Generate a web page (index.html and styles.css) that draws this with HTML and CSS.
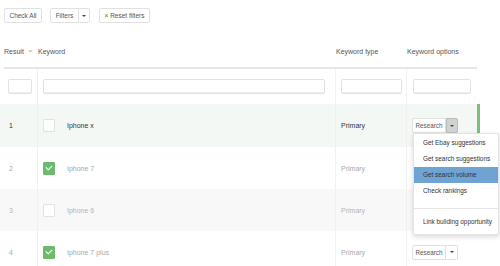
FILE: index.html
```html
<!DOCTYPE html>
<html lang="en">
<head>
  <meta charset="UTF-8" />
  <title>Keywords</title>
  <link rel="stylesheet" href="styles.css">
</head>
<body>
  <div class="toolbar">
    <button class="btn">Check All</button>
    <div class="btn-group">
      <button class="btn">Filters</button>
      <button class="btn btn-caret"><span class="caret"></span></button>
    </div>
    <button class="btn">&#215; Reset filters</button>
  </div>

  <div class="grid">
    <div class="row head">
      <div class="cell">Result <span class="chev">&#8964;</span></div>
      <div class="cell">Keyword</div>
      <div class="cell">Keyword type</div>
      <div class="cell">Keyword options</div>
    </div>

    <div class="row filters">
      <div class="cell"><input class="f f-num" /></div>
      <div class="cell"><input class="f f-kw" /></div>
      <div class="cell"><input class="f f-type" /></div>
      <div class="cell"><input class="f f-opt" /></div>
    </div>

    <div class="row active">
      <div class="cell">1</div>
      <div class="cell"><span class="check"></span><span class="kw">Iphone x</span></div>
      <div class="cell">Primary</div>
      <div class="cell opts">
        <div class="btn-group">
          <button class="btn">Research</button>
          <button class="btn btn-caret pressed"><span class="caret"></span></button>
        </div>
        <ul class="menu">
          <li>Get Ebay suggestions</li>
          <li>Get search suggestions</li>
          <li class="hl">Get search volume</li>
          <li>Check rankings</li>
          <li class="divider"></li>
          <li>Link building opportunity</li>
        </ul>
      </div>
    </div>

    <div class="row muted">
      <div class="cell">2</div>
      <div class="cell"><span class="check on"></span><span class="kw">Iphone 7</span></div>
      <div class="cell">Primary</div>
      <div class="cell"></div>
    </div>

    <div class="row muted striped">
      <div class="cell">3</div>
      <div class="cell"><span class="check"></span><span class="kw">Iphone 6</span></div>
      <div class="cell">Primary</div>
      <div class="cell"></div>
    </div>

    <div class="row muted">
      <div class="cell">4</div>
      <div class="cell"><span class="check on"></span><span class="kw">Iphone 7 plus</span></div>
      <div class="cell">Primary</div>
      <div class="cell opts">
        <div class="btn-group">
          <button class="btn">Research</button>
          <button class="btn btn-caret"><span class="caret"></span></button>
        </div>
      </div>
    </div>
  </div>
</body>
</html>
```

FILE: styles.css
```css
* { box-sizing: border-box; margin: 0; padding: 0; }
body {
  font-family: 'Liberation Sans', Arial, sans-serif;
  font-size: 7px;
  color: #333;
  background: #fff;
  overflow: hidden;
}
.toolbar {
  display: flex;
  gap: 8px;
  padding: 8px 4px 0;
  height: 34px;
}
.btn {
  font-family: inherit;
  font-size: 6.5px;
  color: #555;
  background: #fff;
  border: 1px solid #e0e0e0;
  border-radius: 2px;
  height: 15px;
  padding: 0 6px;
  cursor: pointer;
}
.btn-group { display: flex; }
.btn-group .btn:first-child { border-radius: 2px 0 0 2px; }
.btn-group .btn-caret {
  border-left: none;
  border-radius: 0 2px 2px 0;
  width: 11px;
  padding: 0;
  display: flex;
  align-items: center;
  justify-content: center;
}
.toolbar .btn-group .btn:first-child { width: 29px; padding: 0; }
.toolbar > .btn:first-child { width: 38px; padding: 0; }
.toolbar > .btn:last-child { width: 51px; padding: 0; margin-left: 1px; }
.caret {
  width: 0;
  height: 0;
  border-left: 2px solid transparent;
  border-right: 2px solid transparent;
  border-top: 2px solid #444;
}
.btn-caret.pressed {
  background: #d2d2d2;
  border: 1px solid #bbb;
}

.grid { width: 477px; }
.row {
  display: grid;
  grid-template-columns: 37px 298px 71px 71px;
  align-items: center;
}
.row .cell { padding-left: 5px; height: 100%; display: flex; align-items: center; }
.row .cell:first-child { padding-left: 9px; }
.row .cell + .cell { border-left: 1px solid #f0f0f0; }

.head {
  height: 35px;
  margin-left: 4px;
  width: 473px;
  grid-template-columns: 33px 298px 71px 71px;
  border-bottom: 2px solid #e6e6e6;
  color: #555;
}
.head .cell { padding-left: 1px; padding-top: 1px; }
.head .cell:first-child { padding-left: 0; }
.head .cell + .cell { border-left: none; }
.chev { color: #7fbf7f; font-size: 8px; margin-left: 3px; position: relative; top: -2px; }

.filters { height: 35px; }
.filters .cell:first-child { padding-left: 8px; }
.f {
  height: 15px;
  border: 1px solid #e2e2e2;
  border-radius: 2px;
  background: #fff;
  box-shadow: inset 0 -1px 0 #eee;
}
.f-num { width: 24px; }
.f-kw { width: 282px; }
.f-type { width: 61px; }
.f-opt { width: 58px; margin-left: 1px; }

.active, .muted { height: 42px; }
.active { background: #f3f8f5; height: 43px; position: relative; }
.active::after {
  content: "";
  position: absolute;
  right: -3px;
  top: 0;
  width: 3px;
  height: 43px;
  background: #79c17a;
}
.striped { background: #f8f8f8; }
.muted { color: #a8a8a8; }
.muted.striped { color: #b5b5b5; }

.check {
  width: 12px;
  height: 13px;
  border: 1px solid #e2e2e2;
  background: #fff;
  border-radius: 1px;
  margin-right: 12px;
  display: inline-flex;
  align-items: center;
  justify-content: center;
  flex-shrink: 0;
}
.check.on {
  background: #6cbb6c;
  border-color: #6cbb6c;
}
.check.on::after {
  content: "";
  width: 5px;
  height: 3px;
  border-left: 1.5px solid #fff;
  border-bottom: 1.5px solid #fff;
  transform: rotate(-45deg);
  margin-top: -2px;
}

.opts { position: relative; padding-left: 6px; }
.opts .btn { height: 15px; color: #555; font-size: 6.3px; }
.opts .btn:first-child { width: 34px; padding: 0; }
.opts .btn-caret { width: 12px; }

.menu {
  position: absolute;
  left: 6px;
  top: 29px;
  width: 86px;
  list-style: none;
  background: #fff;
  border: 1px solid #e4e4e4;
  box-shadow: 0 2px 5px rgba(0,0,0,0.15);
  padding: 1px 0 4px;
  z-index: 2;
  color: #333;
  font-size: 6.4px;
}
.menu li {
  height: 16px;
  line-height: 16px;
  padding-left: 9px;
  white-space: nowrap;
}
.menu li.hl { background: #6ea3d3; }
.menu li.divider {
  height: 10px;
  border-bottom: 1px solid #e5e5e5;
  margin-bottom: 5px;
}
```
